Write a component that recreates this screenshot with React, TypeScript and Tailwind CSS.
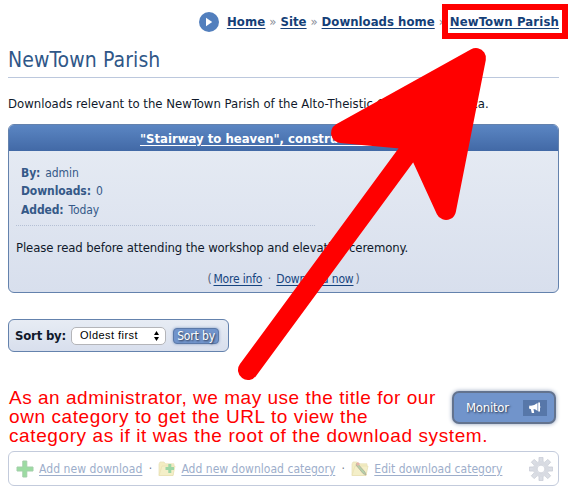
import React from "react";

const link = "underline underline-offset-2 decoration-1";

function PlayIcon() {
  return (
    <svg width="20" height="20" viewBox="0 0 20 20" className="shrink-0">
      <circle cx="10" cy="10" r="10" fill="#527fbd" />
      <path d="M7 5.8v8.4l6.2-4.2z" fill="#fff" />
    </svg>
  );
}

function Folder({ children }: { children: React.ReactNode }) {
  return (
    <svg width="18" height="18" viewBox="0 0 18 18" className="shrink-0">
      <path d="M1 15V4l1-2h4l1.500 1.800H16l-1 11.700H1z" fill="#f3edc2" stroke="#e9e2bc" strokeWidth=".8" />
      <path d="M1 15.500L4 6h13l-2 9.500z" fill="#f4efc8" stroke="#e8dfb2" strokeWidth=".7" />
      {children}
    </svg>
  );
}

function Gear() {
  return (
    <svg width="24" height="24" viewBox="-12 -12 24 24" className="shrink-0">
      <g fill="#dbdee5" stroke="#c8ccd5" strokeWidth=".8">
        {[0, 45, 90, 135, 180, 225, 270, 315].map((a) => (
          <path key={a} d="M-2 -7V-11.600H2V-7z" transform={`rotate(${a})`} />
        ))}
      </g>
      <circle r="6.100" fill="none" stroke="#d8dbe2" strokeWidth="4" />
      <circle r="3.900" fill="#fff" stroke="#c8ccd5" strokeWidth=".8" />
    </svg>
  );
}

function Meta({ label, value, className }: { label: string; value: string; className: string }) {
  return (
    <div className={`flex gap-[5px] ${className}`}>
      <b className="tracking-[-0.1px]">{label}</b>
      <span className="tracking-[-0.1px]">{value}</span>
    </div>
  );
}

export default function App() {
  return (
    <div className="relative h-[495px] w-[570px] overflow-hidden bg-white pl-2 font-['DejaVu_Sans_Condensed','DejaVu_Sans',sans-serif] text-[13px] text-[#10192b]">
      <div className="w-[551px]">
        <nav className="flex h-[42px] items-start justify-end pt-3 font-bold leading-[19px] text-[#153f78]">
          <PlayIcon />
          <a className={`ml-2 tracking-[0.15px] ${link}`}>Home</a>
          <span className="w-[15px] text-center font-normal text-[#8a8f99]">»</span>
          <a className={`tracking-[0.05px] ${link}`}>Site</a>
          <span className="w-[15px] text-center font-normal text-[#8a8f99]">»</span>
          <a className={`tracking-[0.03px] ${link}`}>Downloads home</a>
          <span className="w-[15px] text-center font-normal text-[#8a8f99]">»</span>
          <a className={`tracking-[0.15px] ${link}`}>NewTown Parish</a>
        </nav>

        <h1 className="h-9 border-b border-[#bcc8dd] pt-[5px] text-[21px] leading-[26px] tracking-[0.1px] text-[#2f5788]">NewTown Parish</h1>

        <p className="h-[46px] whitespace-nowrap pt-[16px] leading-[20px]">
          Downloads relevant to the NewTown Parish of the Alto-Theistic Church of America.
        </p>

        <section className="h-[169px] overflow-hidden rounded-[6px] border border-[#6482ad] bg-linear-to-b from-[#e7ecf4] to-[#d8dfed]">
          <h2 className="h-[26px] bg-linear-to-b from-[#5b86c3] to-[#4269a6] pl-[131px] text-[13px] leading-[27px] font-bold text-white">
            <a className={link}>"Stairway to heaven", construction guide</a>
          </h2>
          <div className="ml-[7px] h-[75px] w-[299px] border-b border-dotted border-[#b5c0d5] pl-[5px] pt-[13px] text-[12px] text-[#355988]">
            <Meta label="By:" value="admin" className="h-[18px] leading-[18px]" />
            <Meta label="Downloads:" value="0" className="h-[19px] leading-[18px]" />
            <Meta label="Added:" value="Today" className="h-[18px] leading-[18px]" />
          </div>
          <p className="ml-[7px] h-[43px] whitespace-nowrap pt-[12px] leading-[20px] tracking-[-0.12px]">Please read before attending the workshop and elevation ceremony.</p>
          <div className="flex justify-center text-[12px] leading-[20px] tracking-[-0.18px] text-[#53627b]">
            <span className="mr-[2px]">(</span>
            <a className={`text-[#174580] ${link}`}>More info</a>
            <span className="w-[14px] text-center">·</span>
            <a className={`text-[#174580] ${link}`}>Download now</a>
            <span className="ml-[2px]">)</span>
          </div>
        </section>

        <section className="mt-[26px] flex h-[33px] w-[221px] items-center rounded-[6px] border border-[#6482ad] bg-linear-to-b from-[#e7ecf4] to-[#d8dfed] pl-[6px]">
          <b className="w-[56px] tracking-[-0.2px]">Sort by:</b>
          <div className="flex h-[18px] w-[95px] items-center justify-between rounded-[5px] border border-[#b4b5b9] bg-white pl-2 pr-[5px] font-['Liberation_Sans',sans-serif] text-[11px] tracking-[0.45px] text-black">
            <span>Oldest first</span>
            <svg width="7" height="10" viewBox="0 0 7 10"><path d="M3.500 0L6 4H1zM1 6H6L3.500 10z" /></svg>
          </div>
          <button className="ml-[7px] flex h-[16px] w-[46px] items-center justify-center whitespace-nowrap rounded-[4px] border border-[#5b79a8] bg-[#7194cb] text-[12px] leading-[14px] tracking-[-0.15px] text-white shadow-[0_0_3px_#8199c2] [text-shadow:1px_1px_2px_#222c40]">Sort by</button>
        </section>

        <div className="mt-[36px] flex h-[63px] justify-between">
          <p className="whitespace-nowrap pl-[1px] font-['Liberation_Sans',sans-serif] text-[19px] leading-[19px] text-[#ff0000]">
            <span className="tracking-[0.52px]">As an administrator, we may use the title for our</span><br />
            <span className="tracking-[0.59px]">own category to get the URL to view the</span><br />
            <span className="tracking-[0.6px]">category as if it was the root of the download system.</span>
          </p>
          <button className="-ml-[60px] mr-[3px] mt-[3px] flex h-[33px] w-[104px] shrink-0 items-center rounded-[7px] border-2 border-[#63738e] bg-[#7194cb] pl-[12px] text-[13px] tracking-[-0.25px] text-white shadow-[0_0_4px_#8d9db9] [text-shadow:1px_1px_2px_#222c40]">
            <span className="w-[57px] text-left">Monitor</span>
            <span className="flex h-[16px] w-[24px] items-center justify-center bg-[#5777a9]">
              <svg width="14" height="14" viewBox="0 0 14 14"><path d="M1.500 4.500Q5.500 5.200 9.500 2V10Q7.500 8.200 5.500 8L6.200 12H3.800L2.800 8H1.500Q0.500 6.200 1.500 4.500zM10.200 1.500H12V5Q13 6 12 7V10.500H10.200z" fill="#fff" /></svg>
            </span>
          </button>
        </div>

        <footer className="flex h-[35px] items-center whitespace-nowrap rounded-[6px] border border-[#c3cbdc] pl-[7px] pr-[5px] text-[12px] text-[#9daecb]">
          <svg width="18" height="18" viewBox="0 0 18 18" className="shrink-0"><path d="M6.800 1h4v6H17v4h-6.200v6h-4v-6H1V7h5.800z" fill="#9bdca1" stroke="#a3ceaa" strokeWidth="1" strokeLinejoin="round" /></svg>
          <a className={`ml-[5px] tracking-[0.07px] ${link}`}>Add new download</a>
          <span className="w-[16px] text-center text-[#727b8c]">·</span>
          <Folder><path d="M10.300 4h3v3H16v3h-2.700v3h-3v-3H7.500V7h2.800z" fill="#9cd6a5" /></Folder>
          <a className={`ml-[5px] tracking-[0.02px] ${link}`}>Add new download category</a>
          <span className="w-[16px] text-center text-[#727b8c]">·</span>
          <Folder><path d="M6 3L14 12L15 15L12 13.500L5 5z" fill="#b4d1aa" stroke="#aaa894" strokeWidth=".7" /><path d="M5 4L7 2L9 4L7 6z" fill="#e6b4a9" /></Folder>
          <a className={`ml-[5px] tracking-[0.02px] ${link}`}>Edit download category</a>
          <span className="ml-auto"><Gear /></span>
        </footer>
      </div>

      {/* Annotation drawn over the page */}
      <svg className="absolute left-0 top-0" width="570" height="495" viewBox="0 0 570 495">
        <rect x="445" y="7" width="120" height="29" fill="none" stroke="#f00" strokeWidth="6" />
        <path d="M248 370L412 147" fill="none" stroke="#f00" strokeWidth="20" strokeLinecap="round" />
        <path d="M476 58L341 133L406 139L419 151L446 210Z" fill="#f00" stroke="#f00" strokeWidth="20" strokeLinejoin="round" />
      </svg>
    </div>
  );
}
